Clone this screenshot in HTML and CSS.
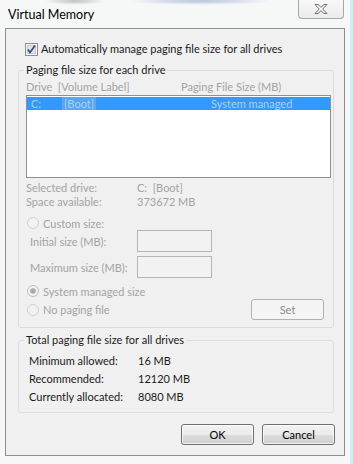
FILE: index.html
```html
<!DOCTYPE html>
<html lang="en">
<head>
  <meta charset="UTF-8" />
  <meta name="viewport" content="width=device-width, initial-scale=1.0"/>
  <title>Virtual Memory</title>
  <link rel="stylesheet" href="styles.css">
</head>
<body>

  <div class="window">
    <!-- title bar -->
    <div class="titlebar">
      <span class="title">Virtual Memory</span>
      <button class="close-btn" title="Close">
        <svg width="14" height="12" viewBox="0 0 14 12">
          <path d="M1 1.5 L4 1.5 L7 4.3 L10 1.5 L13 1.5 L8.7 6 L13 10.5 L10 10.5 L7 7.7 L4 10.5 L1 10.5 L5.3 6 Z" fill="#fff" stroke="#6e6e6e" stroke-width="1" stroke-linejoin="round"/>
        </svg>
      </button>
    </div>

    <div class="client">
      <label class="check-row">
        <span class="checkbox">
          <svg width="13" height="13" viewBox="0 0 13 13">
            <rect x="0.5" y="0.5" width="12" height="12" fill="#f4f4f4" stroke="#8f8f8f"/>
            <rect x="2.5" y="2.5" width="8" height="8" fill="#dfe3ea" stroke="#c6cbd4"/>
            <path d="M3 6.5 L5 9.5 L10 2.5" fill="none" stroke="#3c4e7a" stroke-width="1.8"/>
          </svg>
        </span>
        Automatically manage paging file size for all drives
      </label>

      <fieldset class="group drives">
        <legend>Paging file size for each drive</legend>
        <div class="list-head">
          <span class="head-drive">Drive&nbsp; [Volume Label]</span>
          <span>Paging File Size (MB)</span>
        </div>
        <div class="listbox">
          <div class="list-row selected">
            <span class="row-letter">C:</span>
            <span class="row-label"><span class="focus">[Boot]</span></span>
            <span>System managed</span>
          </div>
        </div>

        <div class="info-row first"><span class="info-key">Selected drive:</span><span>C:&nbsp; [Boot]</span></div>
        <div class="info-row"><span class="info-key">Space available:</span><span>373672 MB</span></div>

        <div class="radio-row custom">
          <span class="radio">
            <svg width="12" height="12" viewBox="0 0 12 12"><circle cx="6" cy="6" r="5.5" fill="#f2f2f2" stroke="#cfcfcf"/></svg>
          </span>
          Custom size:
        </div>
        <div class="field-row">
          <span class="field-label">Initial size (MB):</span>
          <span class="textbox"></span>
        </div>
        <div class="field-row">
          <span class="field-label">Maximum size (MB):</span>
          <span class="textbox"></span>
        </div>

        <div class="radio-row system">
          <span class="radio">
            <svg width="12" height="12" viewBox="0 0 12 12"><circle cx="6" cy="6" r="5.5" fill="#f2f2f2" stroke="#bdbdbd"/><circle cx="6" cy="6" r="2.8" fill="#a9a9a9"/></svg>
          </span>
          System managed size
        </div>
        <div class="radio-row nopaging">
          <span class="radio">
            <svg width="12" height="12" viewBox="0 0 12 12"><circle cx="6" cy="6" r="5.5" fill="#f2f2f2" stroke="#cfcfcf"/></svg>
          </span>
          No paging file
          <button class="btn set" disabled>Set</button>
        </div>
      </fieldset>

      <fieldset class="group totals">
        <legend>Total paging file size for all drives</legend>
        <div class="total-row first"><span class="total-key">Minimum allowed:</span><span>16 MB</span></div>
        <div class="total-row"><span class="total-key">Recommended:</span><span>12120 MB</span></div>
        <div class="total-row"><span class="total-key">Currently allocated:</span><span>8080 MB</span></div>
      </fieldset>

      <div class="actions">
        <button class="btn">OK</button>
        <button class="btn">Cancel</button>
      </div>
    </div>
  </div>

</body>
</html>
```

FILE: styles.css
```css
:root {
  --face: #f0f0f0;
  --text: #1a1a1a;
  --gray-text: #a3a3a3;
  --group-line: #dcdcdc;
}

body {
  margin: 0;
  font-family: 'Segoe UI', Lato, sans-serif;
  font-size: 11px;
  color: var(--text);
}

.window {
  width: 353px;
  height: 464px;
  box-sizing: border-box;
  padding: 0 5px 0 5px;
  background:
    radial-gradient(ellipse 30px 4px at 75px 1px, rgba(90, 90, 90, 0.35), transparent),
    radial-gradient(ellipse 70px 4px at 200px 1px, rgba(60, 100, 170, 0.35), transparent),
    #f6f7f7;
  border-right: 3px solid #d6ecec;
}

.titlebar {
  height: 28px;
  display: flex;
  justify-content: space-between;
  align-items: flex-start;
}

.title {
  padding: 7px 0 0 3px;
  font-size: 12.5px;
  line-height: 16px;
  color: #000;
}

.close-btn {
  width: 46px;
  height: 19px;
  margin-right: 1px;
  padding: 0;
  border: 1px solid #a6a6a6;
  border-top: none;
  border-radius: 0 0 4px 4px;
  background: linear-gradient(#f8f8f8, #ebebeb);
  display: flex;
  align-items: center;
  justify-content: center;
}

.client {
  border: 1px solid #8e8e8e;
  background: var(--face);
  padding: 12px 10px 10px 12px;
  width: 316px;
  height: 404px;
}

.check-row {
  display: flex;
  align-items: center;
  gap: 3px;
  height: 16px;
  line-height: 16px;
  margin-left: 7px;
}

.checkbox,
.radio {
  display: flex;
}

.group {
  margin: 5px 0 0 0;
  padding: 0 1px 0 7px;
  border: 1px solid var(--group-line);
  border-radius: 3px;
  min-width: 0;
}

.group legend {
  padding: 0 2px;
  margin-left: -2px;
  line-height: 16px;
}

.list-head {
  display: flex;
  height: 16px;
  line-height: 16px;
  margin-top: 1px;
  color: var(--gray-text);
}

.head-drive {
  width: 155px;
}

.listbox {
  height: 81px;
  border: 1px solid #8e9090;
  background: #fff;
  margin-right: 1px;
}

.list-row {
  display: flex;
  height: 13px;
  line-height: 13px;
  margin-top: 1px;
  padding-left: 4px;
}

.list-row.selected {
  background: #3399ff;
  color: #a9d2f8;
}

.row-letter {
  width: 31px;
}

.row-label {
  width: 149px;
}

.focus {
  padding: 0 2px;
  outline: 1px dotted #7aa5d4;
  outline-offset: -1px;
  background: #5aa5f0;
}

.info-row {
  display: flex;
  height: 14px;
  line-height: 14px;
  color: var(--gray-text);
}

.info-row.first {
  margin-top: 3px;
}

.info-key {
  width: 111px;
}

.radio-row {
  display: flex;
  align-items: center;
  gap: 4px;
  padding-left: 1px;
  color: var(--gray-text);
}

.radio-row.custom {
  margin-top: 7px;
  height: 14px;
}

.radio-row.system {
  margin-top: 5px;
  height: 16px;
}

.radio-row.nopaging {
  height: 21px;
  margin-bottom: 7px;
}

.field-row {
  display: flex;
  align-items: center;
  height: 22px;
  padding-left: 4px;
  color: var(--gray-text);
}

.field-row + .field-row {
  margin-top: 4px;
}

.field-label {
  width: 107px;
}

.textbox {
  width: 73px;
  height: 20px;
  border: 1px solid #b4b4b4;
  background: #f2f2f2;
}

.btn {
  width: 73px;
  height: 21px;
  padding: 0;
  font-family: inherit;
  font-size: 11px;
  color: #000;
  border: 1px solid #707070;
  border-radius: 3px;
  background: linear-gradient(#f2f2f2 0%, #ebebeb 50%, #dddddd 50%, #cfcfcf 100%);
  box-shadow: inset 0 0 0 1px rgba(255, 255, 255, 0.7);
}

.btn.set {
  margin-left: auto;
  margin-right: 8px;
  color: #8a8a8a;
  border-color: #adb2b5;
  background: #f4f4f4;
  box-shadow: none;
}

.totals {
  margin-top: 4px;
  padding-left: 10px;
  padding-bottom: 6px;
}

.totals legend {
  margin-left: -5px;
}

.total-row {
  display: flex;
  height: 18px;
  line-height: 18px;
}

.total-row.first {
  margin-top: 4px;
}

.total-key {
  width: 109px;
}

.actions {
  display: flex;
  justify-content: flex-end;
  gap: 8px;
  margin: 11px -1px 0 0;
}
```
